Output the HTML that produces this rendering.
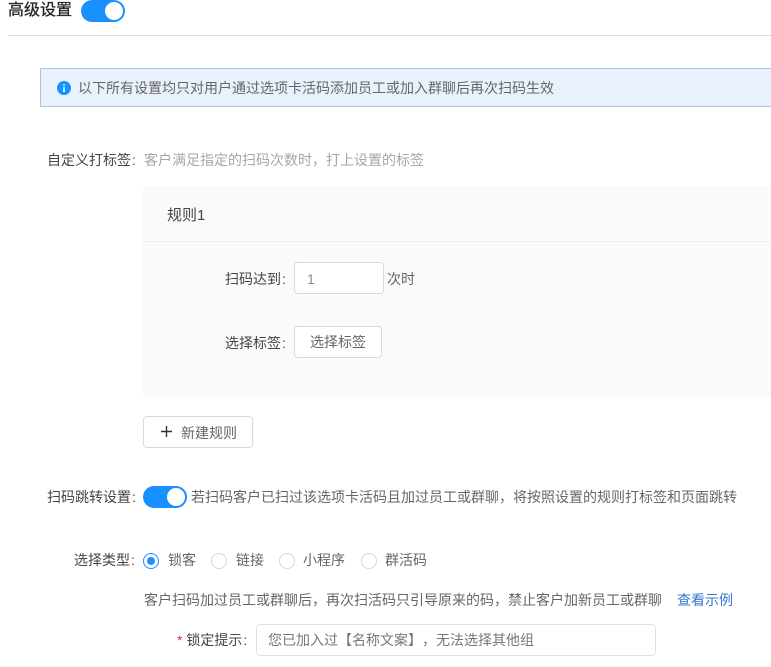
<!DOCTYPE html>
<html lang="zh">
<head>
<meta charset="utf-8">
<style>
html,body{margin:0;padding:0;background:#fff;}
body{width:771px;height:667px;overflow:hidden;position:relative;font-family:"Liberation Sans","Noto Sans CJK SC",sans-serif;font-size:14px;color:#595959;text-spacing-trim:space-all;}
.a{position:absolute;white-space:nowrap;line-height:20px;}
.c{margin-left:1px;}
.box{position:absolute;box-sizing:border-box;background:#fff;border:1px solid #d9d9d9;border-radius:4px;}
.sw{position:absolute;width:44px;height:22px;border-radius:11px;background:#1890ff;}
.sw i{position:absolute;left:24px;top:2px;width:18px;height:18px;border-radius:50%;background:#fff;}
.r{position:absolute;box-sizing:border-box;width:16px;height:16px;border:1px solid #d9d9d9;border-radius:50%;background:#fff;}
</style>
</head>
<body>
<div class="a" style="left:8px;top:0;font-size:16px;line-height:22px;color:#262626;-webkit-text-stroke:0.3px #262626;">高级设置</div>
<div class="sw" style="left:81px;top:0;"><i></i></div>
<div style="position:absolute;left:8px;top:35px;width:763px;height:1px;background:#e0e0e0;"></div>

<div style="position:absolute;box-sizing:border-box;left:40px;top:68px;width:740px;height:39px;background:#e8f1fc;border:1px solid #a9c4e6;"></div>
<svg style="position:absolute;left:57px;top:81px;" width="14" height="14" viewBox="0 0 14 14"><circle cx="7" cy="7" r="7" fill="#1890ff"/><rect x="6.2" y="6" width="1.6" height="5" fill="#fff"/><rect x="6.2" y="3.2" width="1.6" height="1.6" fill="#fff"/></svg>
<div class="a" style="left:78px;top:78px;color:#666;">以下所有设置均只对用户通过选项卡活码添加员工或加入群聊后再次扫码生效</div>

<div class="a" style="left:47px;top:150px;color:#444;">自定义打标签<span class="c">:</span></div>
<div class="a" style="left:144px;top:150px;color:#a6a6a6;">客户满足指定的扫码次数时，打上设置的标签</div>

<div style="position:absolute;left:143px;top:186px;width:628px;height:210px;background:#fafafa;"></div>
<div style="position:absolute;left:143px;top:241px;width:628px;height:1px;background:#f0f0f0;"></div>
<div class="a" style="left:167px;top:206px;font-size:15px;color:#444;">规则1</div>

<div class="a" style="left:225px;top:269px;color:#444;">扫码达到<span class="c">:</span></div>
<div class="box" style="left:294px;top:262px;width:90px;height:32px;"></div>
<div class="a" style="left:307px;top:269px;color:#8c8c8c;">1</div>
<div class="a" style="left:387px;top:269px;color:#666;">次时</div>

<div class="a" style="left:225px;top:333px;color:#444;">选择标签<span class="c">:</span></div>
<div class="box" style="left:294px;top:326px;width:88px;height:32px;"></div>
<div class="a" style="left:310px;top:332px;color:#666;">选择标签</div>

<div class="box" style="left:143px;top:416px;width:110px;height:32px;"></div>
<svg style="position:absolute;left:161px;top:426px;" width="11" height="11" viewBox="0 0 11 11"><path d="M5.5 0V11M0 5.5H11" stroke="#333" stroke-width="1.4" fill="none"/></svg>
<div class="a" style="left:181px;top:423px;color:#666;">新建规则</div>

<div class="a" style="left:47px;top:487px;color:#444;">扫码跳转设置<span class="c">:</span></div>
<div class="sw" style="left:143px;top:486px;"><i></i></div>
<div class="a" style="left:191px;top:487px;color:#666;">若扫码客户已扫过该选项卡活码且加过员工或群聊，将按照设置的规则打标签和页面跳转</div>

<div class="a" style="left:74px;top:550px;color:#444;">选择类型<span class="c">:</span></div>
<div class="r" style="left:143px;top:553px;border-color:#1890ff;"></div>
<div style="position:absolute;left:147px;top:557px;width:8px;height:8px;border-radius:50%;background:#1890ff;"></div>
<div class="a" style="left:168px;top:550px;color:#666;">锁客</div>
<div class="r" style="left:211px;top:553px;"></div>
<div class="a" style="left:236px;top:550px;color:#666;">链接</div>
<div class="r" style="left:279px;top:553px;"></div>
<div class="a" style="left:303px;top:550px;color:#666;">小程序</div>
<div class="r" style="left:361px;top:553px;"></div>
<div class="a" style="left:385px;top:550px;color:#666;">群活码</div>

<div class="a" style="left:144px;top:590px;color:#666;">客户扫码加过员工或群聊后，再次扫活码只引导原来的码，禁止客户加新员工或群聊</div>
<div class="a" style="left:677px;top:590px;color:#3478d4;">查看示例</div>

<div class="a" style="left:177px;top:630px;color:#444;"><span style="color:#e5283c;">*</span> 锁定提示<span class="c">:</span></div>
<div class="box" style="left:256px;top:624px;width:400px;height:32px;border-color:#e0e0e0;"></div>
<div class="a" style="left:268px;top:630px;color:#777;">您已加入过【名称文案】，无法选择其他组</div>
</body>
</html>
